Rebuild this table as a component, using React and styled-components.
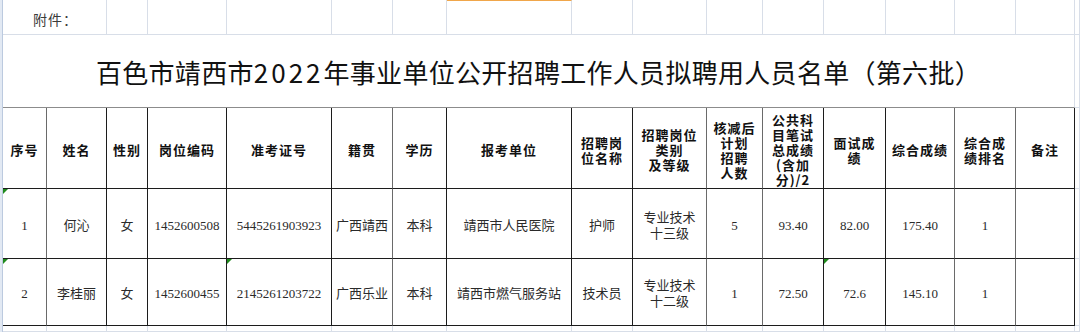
import React from "react";
import styled, { createGlobalStyle, css } from "styled-components";

const Global = createGlobalStyle`
  html, body { margin: 0; padding: 0; background: #ffffff; }
  body { width: 1080px; height: 332px; overflow: hidden; }
`;

const COLS = "44px 60px 41px 79px 105px 61px 54px 125px 61px 74px 56px 61px 62px 69px 61px 59px 1fr";

const Screen = styled.div`
  display: flex;
  width: 1080px;
  height: 332px;
  overflow: hidden;
  background: #fff;
`;

const Frame = styled.div`
  width: 2px;
  flex: 0 0 2px;
  background: #e2e9f3;
  border-right: 1px solid #bccadf;
`;

const Sheet = styled.div`
  flex: 1;
  display: flex;
  flex-direction: column;
`;

const Row = styled.div`
  display: grid;
  grid-template-columns: ${COLS};
  height: ${(p) => p.$h}px;
  flex: 0 0 ${(p) => p.$h}px;
`;

const lineColor = { grid: "#d8dee8", ink: "#1c1c1c", soft: "#6a6a6a", mid: "#8c8c8c" };

const Cell = styled.div`
  position: relative;
  box-sizing: border-box;
  display: flex;
  align-items: center;
  justify-content: center;
  text-align: center;
  grid-column: span ${(p) => p.$span || 1};
  border-right: 1px solid ${(p) => lineColor[p.$right || "ink"]};
  border-bottom: 1px solid ${(p) => lineColor[p.$bottom || "ink"]};
  ${(p) => p.$top && css`border-top: 1px solid ${p.$top};`}
  ${(p) =>
    p.$flag &&
    css`
      &::before {
        content: "";
        position: absolute;
        left: 0;
        top: 0;
        border-top: 5px solid #1f8a1c;
        border-right: 5px solid transparent;
      }
    `}
`;

const NoteCell = styled(Cell)`
  justify-content: flex-start;
  padding-left: 30px;
  padding-top: 4px;
  font-family: "Noto Sans CJK SC", sans-serif;
  font-size: 14px;
  color: #3a3a3a;
  letter-spacing: 1px;
`;

const TitleCell = styled(Cell)`
  font-family: "Noto Sans CJK SC", sans-serif;
  font-size: 26px;
  letter-spacing: 0.3px;
  color: #111;
  padding-top: 1px;
`;

const Digits = styled.span`
  letter-spacing: 3px;
`;

const HeadLines = styled.div`
  display: flex;
  flex-direction: column;
  align-items: center;
`;

const HeadLine = styled.span`
  display: block;
  height: 15px;
  line-height: 15px;
  white-space: nowrap;
`;

const HeadCell = styled(Cell)`
  font-family: "Noto Sans CJK SC", sans-serif;
  font-weight: 700;
  font-size: 13px;
  line-height: 15px;
  letter-spacing: 1px;
  color: #111;
  padding-top: 3px;
`;

const DataCell = styled(Cell)`
  font-family: "Liberation Serif", "Noto Sans CJK SC", serif;
  font-size: 13px;
  line-height: 16px;
  color: #2a2a2a;
  padding-top: 4px;
`;

const widths = 17;

const topRowCells = [
  { span: 2, text: "附件：" },
  {}, {}, {}, {}, {},
  { top: "#f0a64a" },
  {}, {}, {}, {}, {}, {}, {}, {}, {},
];

const headers = [
  "序号", "姓名", "性别", "岗位编码", "准考证号", "籍贯", "学历", "报考单位",
  ["招聘岗", "位名称"],
  ["招聘岗位", "类别", "及等级"],
  ["核减后", "计划", "招聘", "人数"],
  ["公共科", "目笔试", "总成绩", "(含加", "分)/2"],
  ["面试成", "绩"],
  "综合成绩",
  ["综合成", "绩排名"],
  "备注",
];

const softCols = [0, 5, 9, 10, 13, 14];

const rows = [
  {
    h: 70,
    flags: [0],
    cells: ["1", "何沁", "女", "1452600508", "5445261903923", "广西靖西", "本科", "靖西市人民医院", "护师", ["专业技术", "十三级"], "5", "93.40", "82.00", "175.40", "1", ""],
  },
  {
    h: 67,
    flags: [0, 4, 12],
    cells: ["2", "李桂丽", "女", "1452600455", "2145261203722", "广西乐业", "本科", "靖西市燃气服务站", "技术员", ["专业技术", "十二级"], "1", "72.50", "72.6", "145.10", "1", ""],
  },
];

const Lines = ({ value }) =>
  Array.isArray(value) ? (
    <span>
      {value.map((l, i) => (
        <React.Fragment key={i}>
          {i > 0 && <br />}
          {l}
        </React.Fragment>
      ))}
    </span>
  ) : (
    value
  );

const HeadText = ({ value }) =>
  Array.isArray(value) ? (
    <HeadLines>
      {value.map((l, i) => (
        <HeadLine key={i}>{l}</HeadLine>
      ))}
    </HeadLines>
  ) : (
    value
  );

export default function App() {
  return (
    <>
      <Global />
      <Screen>
        <Frame />
        <Sheet>
          <Row $h={35}>
            {topRowCells.map((c, i) =>
              c.text ? (
                <NoteCell key={i} $span={c.span} $right="grid" $bottom="grid">
                  {c.text}
                </NoteCell>
              ) : (
                <Cell key={i} $right="grid" $bottom="grid" $top={c.top} />
              )
            )}
          </Row>
          <Row $h={73}>
            <TitleCell $span={16} $right="grid" $bottom="mid">
              百色市靖西市<Digits>2022</Digits>年事业单位公开招聘工作人员拟聘用人员名单（第六批）
            </TitleCell>
            <Cell $right="grid" $bottom="grid" />
          </Row>
          <Row $h={81}>
            {headers.map((h, i) => (
              <HeadCell key={i} $right={softCols.includes(i) ? "soft" : "ink"}>
                <HeadText value={h} />
              </HeadCell>
            ))}
            <Cell $right="grid" $bottom="grid" />
          </Row>
          {rows.map((r, ri) => (
            <Row key={ri} $h={r.h}>
              {r.cells.map((c, i) => (
                <DataCell
                  key={i}
                  $flag={r.flags.includes(i)}
                  $right={softCols.includes(i) ? "soft" : "ink"}
                >
                  <Lines value={c} />
                </DataCell>
              ))}
              <Cell $right="grid" $bottom="grid" />
            </Row>
          ))}
          <Row $h={6}>
            {Array.from({ length: widths }).map((_, i) => (
              <Cell key={i} $right="grid" $bottom="grid" />
            ))}
          </Row>
        </Sheet>
      </Screen>
    </>
  );
}
